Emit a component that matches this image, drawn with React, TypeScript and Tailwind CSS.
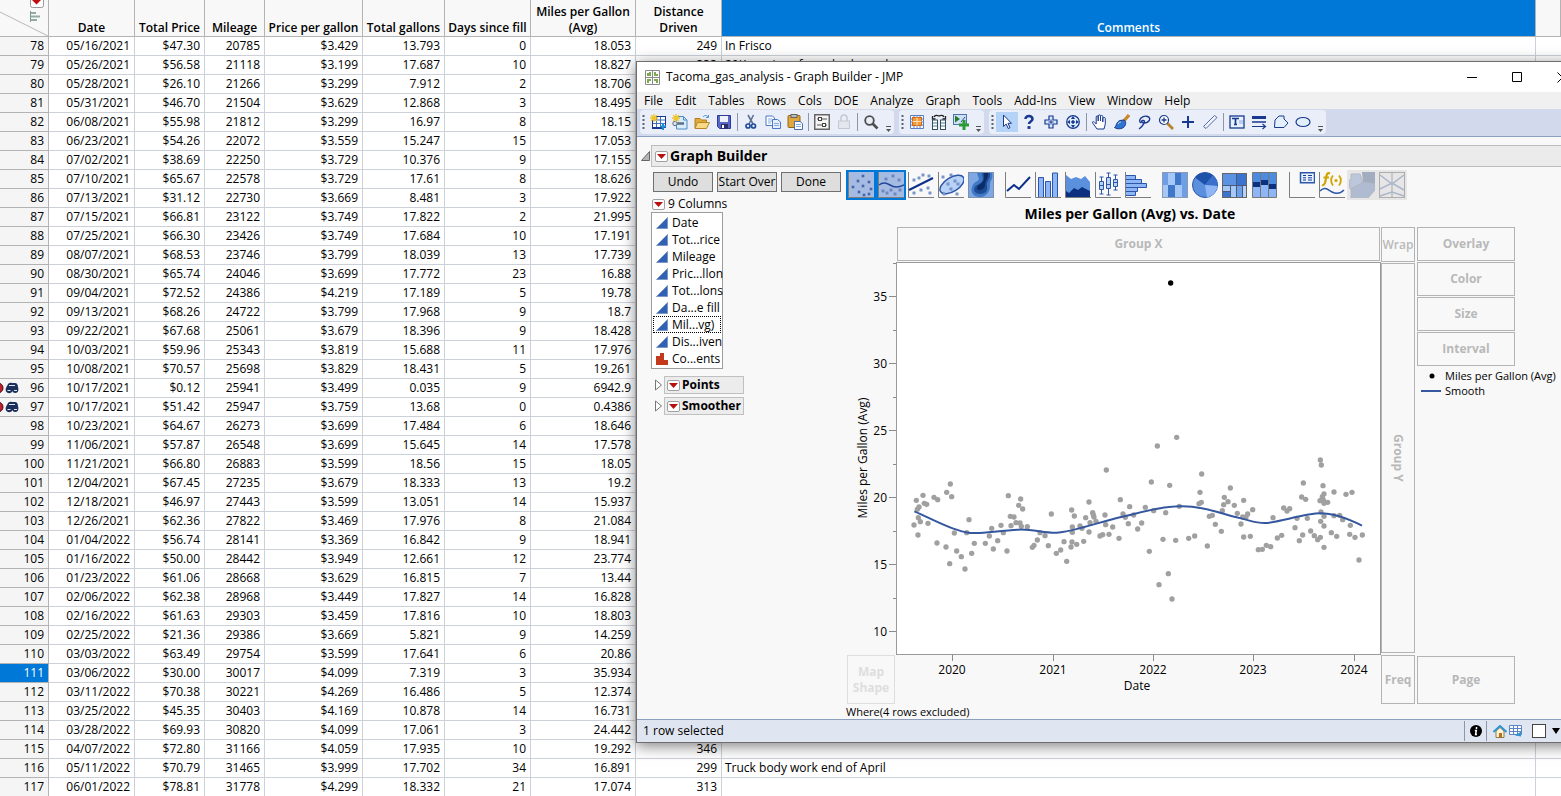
import type { ReactNode } from "react";

interface Fill {
  row: number;
  date: string;
  price: string;
  mileage: number;
  perGallon: string;
  gallons: string;
  days: number;
  mpg: string;
  distance?: string;
  comment?: string;
  excluded?: boolean;
}

const fills: Fill[] = [
  { row: 78, date: "05/16/2021", price: "$47.30", mileage: 20785, perGallon: "$3.429", gallons: "13.793", days: 0, mpg: "18.053", distance: "249", comment: "In Frisco" },
  { row: 79, date: "05/26/2021", price: "$56.58", mileage: 21118, perGallon: "$3.199", gallons: "17.687", days: 10, mpg: "18.827", distance: "333", comment: "20K service of rear brake pads" },
  { row: 80, date: "05/28/2021", price: "$26.10", mileage: 21266, perGallon: "$3.299", gallons: "7.912", days: 2, mpg: "18.706" },
  { row: 81, date: "05/31/2021", price: "$46.70", mileage: 21504, perGallon: "$3.629", gallons: "12.868", days: 3, mpg: "18.495" },
  { row: 82, date: "06/08/2021", price: "$55.98", mileage: 21812, perGallon: "$3.299", gallons: "16.97", days: 8, mpg: "18.15" },
  { row: 83, date: "06/23/2021", price: "$54.26", mileage: 22072, perGallon: "$3.559", gallons: "15.247", days: 15, mpg: "17.053" },
  { row: 84, date: "07/02/2021", price: "$38.69", mileage: 22250, perGallon: "$3.729", gallons: "10.376", days: 9, mpg: "17.155" },
  { row: 85, date: "07/10/2021", price: "$65.67", mileage: 22578, perGallon: "$3.729", gallons: "17.61", days: 8, mpg: "18.626" },
  { row: 86, date: "07/13/2021", price: "$31.12", mileage: 22730, perGallon: "$3.669", gallons: "8.481", days: 3, mpg: "17.922" },
  { row: 87, date: "07/15/2021", price: "$66.81", mileage: 23122, perGallon: "$3.749", gallons: "17.822", days: 2, mpg: "21.995" },
  { row: 88, date: "07/25/2021", price: "$66.30", mileage: 23426, perGallon: "$3.749", gallons: "17.684", days: 10, mpg: "17.191" },
  { row: 89, date: "08/07/2021", price: "$68.53", mileage: 23746, perGallon: "$3.799", gallons: "18.039", days: 13, mpg: "17.739" },
  { row: 90, date: "08/30/2021", price: "$65.74", mileage: 24046, perGallon: "$3.699", gallons: "17.772", days: 23, mpg: "16.88" },
  { row: 91, date: "09/04/2021", price: "$72.52", mileage: 24386, perGallon: "$4.219", gallons: "17.189", days: 5, mpg: "19.78" },
  { row: 92, date: "09/13/2021", price: "$68.26", mileage: 24722, perGallon: "$3.799", gallons: "17.968", days: 9, mpg: "18.7" },
  { row: 93, date: "09/22/2021", price: "$67.68", mileage: 25061, perGallon: "$3.679", gallons: "18.396", days: 9, mpg: "18.428" },
  { row: 94, date: "10/03/2021", price: "$59.96", mileage: 25343, perGallon: "$3.819", gallons: "15.688", days: 11, mpg: "17.976" },
  { row: 95, date: "10/08/2021", price: "$70.57", mileage: 25698, perGallon: "$3.829", gallons: "18.431", days: 5, mpg: "19.261" },
  { row: 96, date: "10/17/2021", price: "$0.12", mileage: 25941, perGallon: "$3.499", gallons: "0.035", days: 9, mpg: "6942.9", excluded: true },
  { row: 97, date: "10/17/2021", price: "$51.42", mileage: 25947, perGallon: "$3.759", gallons: "13.68", days: 0, mpg: "0.4386", excluded: true },
  { row: 98, date: "10/23/2021", price: "$64.67", mileage: 26273, perGallon: "$3.699", gallons: "17.484", days: 6, mpg: "18.646" },
  { row: 99, date: "11/06/2021", price: "$57.87", mileage: 26548, perGallon: "$3.699", gallons: "15.645", days: 14, mpg: "17.578" },
  { row: 100, date: "11/21/2021", price: "$66.80", mileage: 26883, perGallon: "$3.599", gallons: "18.56", days: 15, mpg: "18.05" },
  { row: 101, date: "12/04/2021", price: "$67.45", mileage: 27235, perGallon: "$3.679", gallons: "18.333", days: 13, mpg: "19.2" },
  { row: 102, date: "12/18/2021", price: "$46.97", mileage: 27443, perGallon: "$3.599", gallons: "13.051", days: 14, mpg: "15.937" },
  { row: 103, date: "12/26/2021", price: "$62.36", mileage: 27822, perGallon: "$3.469", gallons: "17.976", days: 8, mpg: "21.084" },
  { row: 104, date: "01/04/2022", price: "$56.74", mileage: 28141, perGallon: "$3.369", gallons: "16.842", days: 9, mpg: "18.941" },
  { row: 105, date: "01/16/2022", price: "$50.00", mileage: 28442, perGallon: "$3.949", gallons: "12.661", days: 12, mpg: "23.774" },
  { row: 106, date: "01/23/2022", price: "$61.06", mileage: 28668, perGallon: "$3.629", gallons: "16.815", days: 7, mpg: "13.44" },
  { row: 107, date: "02/06/2022", price: "$62.38", mileage: 28968, perGallon: "$3.449", gallons: "17.827", days: 14, mpg: "16.828" },
  { row: 108, date: "02/16/2022", price: "$61.63", mileage: 29303, perGallon: "$3.459", gallons: "17.816", days: 10, mpg: "18.803" },
  { row: 109, date: "02/25/2022", price: "$21.36", mileage: 29386, perGallon: "$3.669", gallons: "5.821", days: 9, mpg: "14.259" },
  { row: 110, date: "03/03/2022", price: "$63.49", mileage: 29754, perGallon: "$3.599", gallons: "17.641", days: 6, mpg: "20.86" },
  { row: 111, date: "03/06/2022", price: "$30.00", mileage: 30017, perGallon: "$4.099", gallons: "7.319", days: 3, mpg: "35.934" },
  { row: 112, date: "03/11/2022", price: "$70.38", mileage: 30221, perGallon: "$4.269", gallons: "16.486", days: 5, mpg: "12.374" },
  { row: 113, date: "03/25/2022", price: "$45.35", mileage: 30403, perGallon: "$4.169", gallons: "10.878", days: 14, mpg: "16.731" },
  { row: 114, date: "03/28/2022", price: "$69.93", mileage: 30820, perGallon: "$4.099", gallons: "17.061", days: 3, mpg: "24.442" },
  { row: 115, date: "04/07/2022", price: "$72.80", mileage: 31166, perGallon: "$4.059", gallons: "17.935", days: 10, mpg: "19.292", distance: "346" },
  { row: 116, date: "05/11/2022", price: "$70.79", mileage: 31465, perGallon: "$3.999", gallons: "17.702", days: 34, mpg: "16.891", distance: "299", comment: "Truck body work end of April" },
  { row: 117, date: "06/01/2022", price: "$78.81", mileage: 31778, perGallon: "$4.299", gallons: "18.332", days: 21, mpg: "17.074", distance: "313" },
];

const SELECTED_ROW = 111;

// Scatter points, in thirds of a pixel from the left end of the date axis
const earlyPoints: [number, number][] = [
  [72, 375], [79, 301], [87, 321], [82, 328], [85, 353], [91, 365], [84, 405], [99, 286], [103, 310], [110, 313],
  [114, 370], [132, 292], [143, 299], [141, 429], [170, 277], [181, 252], [185, 290], [168, 441], [179, 491], [193, 399],
  [200, 453], [214, 470], [225, 507], [230, 398], [237, 359], [245, 460], [253, 430], [286, 430], [298, 408], [305, 385],
  [310, 447], [323, 422], [333, 376], [340, 398], [351, 453], [355, 287], [361, 349], [363, 377], [372, 351], [378, 368],
  [386, 316], [392, 297], [398, 327], [390, 369], [394, 379], [412, 380], [427, 442], [432, 436], [442, 420], [450, 398],
  [465, 407], [475, 437], [484, 342], [499, 460], [512, 450], [522, 425], [530, 484], [543, 441], [546, 426], [545, 330],
  [553, 348], [547, 381], [547, 397], [560, 433], [570, 378], [576, 385], [581, 424], [587, 353], [597, 306], [600, 368],
  [597, 396], [608, 338], [610, 345], [612, 351], [618, 364], [630, 408], [638, 404], [645, 345], [647, 374], [649, 210],
  [657, 403], [668, 381], [687, 415], [691, 299], [699, 342], [706, 352], [715, 371], [719, 320], [731, 345], [743, 387],
  [755, 369], [766, 322], [778, 454], [784, 246], [791, 332], [802, 138], [807, 554],
];

const latePoints: [number, number][] = [
  [39, 418], [47, 338], [55, 521], [59, 256], [66, 597], [77, 421], [80, 112], [88, 319], [116, 415], [134, 408],
  [147, 311], [154, 307], [150, 277], [155, 222], [172, 438], [178, 349], [187, 346], [196, 373], [214, 394], [217, 332],
  [221, 314], [223, 292], [234, 305], [241, 264], [253, 316], [262, 340], [273, 372], [278, 351], [288, 351], [281, 301],
  [281, 411], [293, 342], [301, 409], [308, 329], [325, 449], [337, 448], [349, 436], [362, 440], [369, 353], [382, 414],
  [395, 406], [401, 324], [411, 333], [419, 326], [435, 383], [441, 355], [448, 422], [458, 405], [455, 291], [467, 298],
  [460, 249], [472, 355], [482, 393], [493, 407], [503, 419], [511, 412], [511, 180], [514, 195], [519, 257], [522, 282],
  [517, 290], [510, 302], [520, 300], [522, 310], [533, 307], [513, 336], [522, 349], [512, 364], [522, 378], [522, 442],
  [544, 398], [552, 276], [552, 347], [560, 409], [569, 346], [578, 359], [588, 283], [606, 277], [601, 376], [599, 403],
  [615, 412], [627, 480], [637, 405],
];

const yearTicks: [string, number][] = [["2020", 56], ["2021", 157], ["2022", 257], ["2023", 357], ["2024", 458]];

const columns = ["Date", "Tot...rice", "Mileage", "Pric...llon", "Tot...lons", "Da...e fill", "Mil...vg)", "Dis...iven", "Co...ents"];

const menus = ["File", "Edit", "Tables", "Rows", "Cols", "DOE", "Analyze", "Graph", "Tools", "Add-Ins", "View", "Window", "Help"];

function RedTriangle() {
  return (
    <button aria-label="Options" className="flex h-[11px] w-[13px] shrink-0 items-center justify-center rounded-xs border border-[#a0a0a0] bg-white">
      <svg width="9" height="5" viewBox="0 0 9 5">
        <path d="M0 0h9L4.500 5z" fill="#b80f0f" />
      </svg>
    </button>
  );
}

function Icon({ children }: { children: ReactNode }) {
  return (
    <svg width="16" height="16" viewBox="0 0 16 16" fill="none" stroke="#17398f">
      {children}
    </svg>
  );
}

function Tool({ label, active, children }: { label: string; active?: boolean; children: ReactNode }) {
  return (
    <button aria-label={label} className={`flex h-5 w-[22px] items-center justify-center ${active ? "bg-[#b5d3f7]" : ""}`}>
      <Icon>{children}</Icon>
    </button>
  );
}

function Separator() {
  return <div className="mx-0.5 h-[18px] w-px bg-[#8e96a8]" />;
}

function ToolGroup({ children }: { children: ReactNode }) {
  return (
    <div className="flex h-6 items-center rounded-sm bg-[#e9eef9]">
      <svg className="w-[7px]" height="15" viewBox="0 0 7 15">
        <path d="M3.500 0v15" stroke="#5d6474" strokeWidth="2" strokeDasharray="2 2" />
      </svg>
      {children}
      <svg className="mt-3.5 w-3" height="7" viewBox="0 0 12 7">
        <path d="M4 .5h5" stroke="#555" />
        <path d="M4 3h5L6.500 6z" fill="#555" />
      </svg>
    </div>
  );
}

const sparkle = <path d="M4 0v8M0 4h8M1.200 1.200l5.600 5.600M6.800 1.200l-5.600 5.600" stroke="#f0c52e" strokeWidth="1.300" />;

function Toolbar() {
  return (
    <div className="flex h-7 items-start gap-[5px] border-b border-[#8f9fbe] bg-[#d3d9ec] pt-px pl-[3px]">
      <ToolGroup>
        <Tool label="New data table">
          <rect x="2.500" y="2.500" width="13" height="11" fill="#fff" />
          <path d="M3 6h12M3 9.500h12M6.500 3v10M10.500 3v10" stroke="#3f6fb8" />
          <path d="M2 14h11" stroke="#17398f" strokeWidth="2" />
          <path d="M13 9v7M10.500 12.500H16" stroke="#1f8fd0" strokeWidth="2" />
          {sparkle}
        </Tool>
        <Tool label="New script">
          <path d="M4.500 2.500h7l3.500 3.500v9H4.500z" fill="#d9ebfb" stroke="#4d8cc0" />
          <path d="M11.500 2.500v3.500h3.500" stroke="#4d8cc0" />
          <path d="M3 9.500h9" stroke="#5a7185" strokeWidth="2.500" />
          <circle cx="3" cy="9.500" r="2.200" stroke="#5a7185" fill="#dde" />
          {sparkle}
        </Tool>
        <Tool label="Open">
          <path d="M1 4.500h5l1.500 1.500h5v8H1z" fill="#e2ab35" stroke="#b07f1c" />
          <path d="M3.500 8.500h12L12.500 14.500H1z" fill="#f9d986" stroke="#b8872a" />
          <path d="M9 3c1.500-2 4-2 5 0M14.500 1v2.500H12" stroke="#4e8fce" />
        </Tool>
        <Tool label="Save">
          <path d="M1.500 1.500h13v13h-11l-2-2z" fill="#5968c8" stroke="#303b94" />
          <rect x="4" y="2" width="8" height="6" fill="#eef1fb" stroke="none" />
          <rect x="5" y="10" width="7" height="4.500" fill="#2a2f66" stroke="none" />
          <rect x="6" y="11" width="2" height="3" fill="#fff" stroke="none" />
        </Tool>
        <Separator />
        <Tool label="Cut">
          <path d="M5 1l5 9M10.500 1L6 10" stroke="#60708f" strokeWidth="1.600" />
          <circle cx="5" cy="12" r="2" strokeWidth="1.700" stroke="#214d9e" />
          <circle cx="10.500" cy="12" r="2" strokeWidth="1.700" stroke="#214d9e" />
        </Tool>
        <Tool label="Copy">
          <path d="M1 2h6.500l2 2v7.500H1z" fill="#fff" stroke="#4a78c4" />
          <path d="M3 5h4M3 7h4M3 9h3" stroke="#86aae0" />
          <path d="M7.500 5.500h5l3 2.500v6.500h-8z" fill="#e6f0ff" stroke="#4a78c4" />
          <path d="M9 9.500h5M9 11.500h5" stroke="#86aae0" />
        </Tool>
        <Tool label="Paste">
          <rect x="1" y="1.500" width="12" height="12" rx="1" fill="#e0a83c" stroke="#936719" />
          <rect x="4" y=".5" width="6" height="3" fill="#b8bcc4" stroke="#666" />
          <path d="M7.500 7.500h5.500l2.500 2v6h-8z" fill="#fff" stroke="#4a6fae" />
          <path d="M9 10.500h5M9 12.500h5" stroke="#86aae0" />
        </Tool>
        <Separator />
        <Tool label="Local data filter">
          <rect x=".75" y=".75" width="14.500" height="14.500" fill="#f4f4f4" stroke="#666" strokeWidth="1.500" />
          <path d="M3 5h10M3 11h10" stroke="#555" />
          <rect x="4.500" y="3.500" width="3" height="3" fill="#fff" stroke="#444" />
          <rect x="8.500" y="9.500" width="3" height="3" fill="#fff" stroke="#444" />
        </Tool>
        <Tool label="Lock">
          <path d="M5 7V4a3 3 0 016 0v3" stroke="#c3c7d1" strokeWidth="1.400" />
          <rect x="2.500" y="7" width="11" height="7.500" fill="#e3e6ee" stroke="#c3c7d1" />
        </Tool>
        <Separator />
        <Tool label="Search">
          <circle cx="6.500" cy="6.500" r="4.300" stroke="#4d4d4d" strokeWidth="1.800" />
          <path d="M9.500 9.500l5 5" stroke="#4d4d4d" strokeWidth="2.600" />
        </Tool>
      </ToolGroup>
      <ToolGroup>
        <Tool label="Data table">
          <path d="M1.500 1.500h13v13h-13zM2 5h12M2 8h12M2 11h12M5 1v13M8 1v13M11 1v13" fill="#fff" stroke="#5b7fc4" />
          <rect x="3.500" y="3.500" width="9" height="8" fill="#f09a3c" stroke="#d06a1a" />
          <path d="M3.500 7.500h9M8 3.500v8" stroke="#ffe3b8" />
        </Tool>
        <Tool label="Compare tables">
          <path d="M3 3c1-2 3-2 5-1 2-1 4-1 5 1" stroke="#222" strokeWidth="1.300" />
          <path d="M1.500 2v3h3M14.500 2v3h-3" stroke="#222" strokeWidth="1.300" />
          <rect x="1.500" y="6" width="5" height="9.500" fill="#fff" stroke="#344c5c" />
          <rect x="9.500" y="6" width="5" height="9.500" fill="#fff" stroke="#344c5c" />
          <path d="M2 9h4M2 12h4M10 9h4M10 12h4" stroke="#4d7890" />
        </Tool>
        <Tool label="Run script">
          <rect x=".5" y=".5" width="13" height="10" fill="#cfe0f5" stroke="#4e74b0" />
          <path d="M2 1.500l5 3.500-5 3.500z" fill="#1d7d2c" stroke="none" />
          <path d="M8 8l4-5" stroke="#234c9c" />
          <path d="M11 6v10M6 11h10" stroke="#2d9a35" strokeWidth="3" />
        </Tool>
      </ToolGroup>
      <ToolGroup>
        <Tool label="Arrow" active>
          <path d="M4.500 1v11.500l2.700-2.500 2 4.500 1.800-.8-2-4.400h3.500z" fill="#fff" />
        </Tool>
        <Tool label="Help tool">
          <path d="M4.500 5c0-4 7-4 7 0 0 2.500-3.500 2.500-3.500 5" strokeWidth="2.600" />
          <path d="M6.500 13.500h3" strokeWidth="2.800" />
        </Tool>
        <Tool label="Crosshairs">
          <path d="M6 2h4v4h4v4h-4v4H6v-4H2V6h4z" fill="#dbe9fc" strokeWidth="1.200" />
          <path d="M8 5.500v5M5.500 8h5" />
        </Tool>
        <Tool label="Scroller">
          <circle cx="8" cy="8" r="6.300" fill="#dbe9fc" strokeWidth="1.200" />
          <circle cx="8" cy="8" r="1.300" fill="#17398f" />
          <path d="M8 2l2 3H6zM8 14l2-3H6zM2 8l3-2v4zM14 8l-3-2v4z" fill="#17398f" stroke="none" />
        </Tool>
        <Separator />
        <Tool label="Grabber">
          <path d="M5 15L.7 9c-.8-1.500 1-2 2-.5L4.200 10V3c0-1.500 2-1.500 2 0v4V2c0-1.500 2.300-1.500 2.300 0v5-4.500c0-1.400 2.300-1.400 2.300 0V8 4.500c0-1.300 2.500-1.300 2.500 0V10L12 15z" fill="#fff" />
        </Tool>
        <Tool label="Brush">
          <path d="M15 1L9 8" stroke="#c8872a" strokeWidth="3.200" />
          <path d="M10 6c2.500 1.500 2 5 0 7s-7 2.500-9.500.5C2.500 12.500 2 8 6 6.500z" fill="#2f74d0" />
          <path d="M4 10c1-2 2-2 3-2" stroke="#cfe4ff" />
        </Tool>
        <Tool label="Lasso">
          <path d="M5 9C1 6 7 1 11.500 2.500 16 4 13 9 8 9c-3 0-3-3-.5-2.500S7 12 3 15" strokeWidth="1.400" />
        </Tool>
        <Tool label="Magnifier">
          <path d="M9 9l6 6" stroke="#b9832c" strokeWidth="2.800" />
          <circle cx="6" cy="6" r="4.500" fill="#fff" strokeWidth="1.200" />
          <path d="M6 3.500v5M3.500 6h5" strokeWidth="1.300" />
        </Tool>
        <Tool label="Add annotation">
          <path d="M8 2v12M2 8h12" strokeWidth="2" />
        </Tool>
        <Tool label="Ruler">
          <path d="M1.500 12.500l11-11 2.500 2-11 11z" fill="#eef3fd" stroke="#5769a6" />
        </Tool>
        <Separator />
        <Tool label="Text box">
          <rect x="1" y="2" width="14" height="12" fill="#e7f1ff" strokeWidth="1.300" />
          <path d="M3 4.500h7M6.500 4.500v6M5 10.500h3" strokeWidth="1.700" />
          <path d="M10 7h4M10 9h4" stroke="#86aae0" />
        </Tool>
        <Tool label="Line">
          <path d="M1 3.500h14" strokeWidth="3" />
          <path d="M1 8h14" strokeWidth="1.500" />
          <path d="M1 12.500h13M11.500 10l3 2.500-3 2.500" strokeWidth="1.200" />
        </Tool>
        <Tool label="Polygon">
          <path d="M2 6l4-4h5v3l4 4-4 4.500H1.500z" fill="#e3effd" />
        </Tool>
        <Tool label="Oval">
          <ellipse cx="8" cy="8" rx="7" ry="4.500" fill="#e3effd" strokeWidth="1.200" />
        </Tool>
      </ToolGroup>
    </div>
  );
}

function ChartButton({ label, state, children }: { label: string; state?: "on" | "off"; children: ReactNode }) {
  return (
    <button
      aria-label={label}
      className={`flex size-[30px] items-center justify-center ${
        state === "on" ? "bg-[#a5bbe2] outline-2 -outline-offset-2 outline-[#0078d7]" : state === "off" ? "bg-[#e6e6e6]" : ""
      }`}
    >
      <svg width="26" height="26" viewBox="0 0 26 26" fill="none" stroke="#2c56a8">
        {children}
      </svg>
    </button>
  );
}

const axes = <path d="M.5 0v25.500H26" stroke="#7d7d7d" />;

function Dots({ at, fill = "#a9c4f2" }: { at: [number, number][]; fill?: string }) {
  return (
    <>
      {at.map(([x, y]) => (
        <rect key={`${x}-${y}`} x={x} y={y} width="2" height="2" fill={fill} stroke="#5f7cb8" strokeWidth=".8" />
      ))}
    </>
  );
}

function ChartPalette() {
  return (
    <div className="flex gap-[7px]">
      <div className="flex">
        <ChartButton label="Points" state="on">
          {axes}
          <Dots fill="#1b3f9a" at={[[14, 3], [9, 8], [20, 9], [4, 14], [14, 13], [22, 16], [10, 19], [20, 21], [15, 22]]} />
        </ChartButton>
        <ChartButton label="Smoother" state="on">
          {axes}
          <Dots fill="#7f9fdc" at={[[14, 3], [7, 6], [20, 7], [4, 18], [12, 17], [21, 17], [8, 20], [16, 21]]} />
          <path d="M1 13c5-4 9-1 13 1s8 1 12-1" stroke="#23479c" strokeWidth="1.500" />
        </ChartButton>
        <ChartButton label="Line of fit">
          {axes}
          <Dots at={[[14, 2], [5, 7], [10, 5], [20, 3], [5, 20], [12, 17], [19, 15], [21, 20]]} />
          <path d="M1 18L25 6" stroke="#0d2f8c" strokeWidth="2" />
        </ChartButton>
        <ChartButton label="Ellipse">
          {axes}
          <ellipse cx="14" cy="12.500" rx="13.500" ry="7" transform="rotate(-32 14 12.500)" fill="#b9d2f7" strokeWidth="1.500" />
          <Dots at={[[4, 4], [12, 2], [9, 11], [16, 8], [12, 16], [19, 11], [5, 21], [18, 21]]} />
        </ChartButton>
        <ChartButton label="Contour">
          <rect x=".5" y=".5" width="25" height="25" fill="#7fa7e3" stroke="#7b8fae" />
          <path d="M9 1h15c2 6-3 8-2 13 0 6-4 11-10 11S2 21 4 15s6-5 7-8z" fill="#3f78c4" stroke="none" />
          <path d="M14 1h8c1 6-4 8-3 13s-2 8-7 8-7-4-5-7 7-3 8-8z" fill="#1d4b94" stroke="none" />
          <path d="M16 1h4c1 5-3 7-3 12 0 5-8 7-8 3 0-3 6-4 7-9z" fill="#0b2c66" stroke="none" />
        </ChartButton>
      </div>
      <div className="flex">
        <ChartButton label="Line">
          {axes}
          <path d="M2 19l7-6 5 4L25 5" stroke="#0d2f8c" strokeWidth="2" />
        </ChartButton>
        <ChartButton label="Bar">
          <path d="M3.500 5.500h5v20h-5zM10.500 9.500h5v16h-5zM17.500 1h5v24.500h-5z" fill="#8eb5f5" />
          {axes}
        </ChartButton>
        <ChartButton label="Area">
          <path d="M1 3l5 4 5-2 5 2 4-3 5 6v15H1z" fill="#5b90dc" stroke="none" />
          <path d="M1 19l3 2 5-5 4 2 4-3 8 4v6H1z" fill="#0c2f80" stroke="none" />
          {axes}
        </ChartButton>
        <ChartButton label="Box plot">
          {axes}
          <path d="M6.500 5v17M4.500 5h4M4.500 22h4M13.500 1v22M11.500 1h4M11.500 23h4M20.500 3v15M18.500 3h4M18.500 18h4" />
          <path d="M4.500 9.500h4v8h-4zM11.500 5.500h4v11h-4zM18.500 7.500h4v7h-4z" fill="#b9d2f7" />
          <path d="M4.500 13.500h4M11.500 12.500h4M18.500 10.500h4" />
        </ChartButton>
        <ChartButton label="Histogram">
          <path d="M.5 3.500h10v4H.5zM.5 7.500h16v4H.5zM.5 11.500h21v4H.5zM.5 15.500h12v4H.5zM.5 19.500h10v4H.5z" fill="#8eb5f5" />
          {axes}
        </ChartButton>
      </div>
      <div className="flex">
        <ChartButton label="Heatmap">
          <rect width="26" height="26" fill="#6e9fe6" stroke="none" />
          <path d="M6 0h7v13H6zM13 13h7v13h-7zM0 13h6v13H0z" fill="#a6c8f7" stroke="none" />
          <path d="M13 0h6v13h-6zM6 13h7v13H6z" fill="#4077c8" stroke="none" />
          <rect x=".5" y=".5" width="25" height="25" stroke="#8a9ab5" />
        </ChartButton>
        <ChartButton label="Pie">
          <circle cx="13" cy="13" r="12.500" fill="#5b90dc" />
          <path d="M13 13L3 5.500A12.500 12.500 0 0121 3.500z" fill="#1e51aa" stroke="none" />
          <path d="M13 13l8-9.500A12.500 12.500 0 0125.500 14z" fill="#3a70cc" stroke="none" />
          <path d="M13 13l12.500 1A12.500 12.500 0 0115 25.400z" fill="#8eb5f5" stroke="none" />
        </ChartButton>
        <ChartButton label="Treemap">
          <rect x=".5" y="1.500" width="24" height="24" fill="#3a74cf" stroke="#666" />
          <path d="M1 2h13v11H1z" fill="#5b93e2" stroke="none" />
          <path d="M1 13h7v7H1zM8 13h6v12H8z" fill="#a6c8f7" stroke="none" />
          <path d="M14 13h6v12h-6z" fill="#6da0ea" stroke="none" />
          <path d="M20 13h4v12h-4z" fill="#b9d2f7" stroke="none" />
          <path d="M.5 13.500h24M14.500 2v23M8.500 13v12M.5 19.500h8M20.500 13v12" stroke="#49597a" />
        </ChartButton>
        <ChartButton label="Mosaic">
          <path d="M1 1h24v24H1z" fill="#4d8be0" stroke="none" />
          <path d="M1 10h8v5H1zM9 8h8v5H9zM17 12h8v5h-8z" fill="#0c2f80" stroke="none" />
          <path d="M1 15h8v10H1zM9 13h8v12H9zM17 17h8v8h-8z" fill="#8eb5f5" stroke="none" />
          <path d="M.5 .5h24v25H.5zM8.500 0v25M16.500 0v25" stroke="#777" fill="none" />
        </ChartButton>
      </div>
      <div className="flex">
        <ChartButton label="Caption box">
          {axes}
          <rect x="11.500" y=".75" width="14" height="10" fill="#e7f1ff" strokeWidth="1.500" />
          <path d="M14 3.500h3M19 3.500h4M14 5.800h3M19 5.800h4M14 8h3M19 8h4" stroke="#17398f" />
        </ChartButton>
        <ChartButton label="Formula">
          {axes}
          <path d="M1 19c5-5 8-1 12 1s8 2 12-2" strokeWidth="1.500" />
          <path d="M11 1.500C8 0 7.500 3 7 6s-1 8-4 7M4.500 5.500H10" stroke="#d2a400" strokeWidth="2.200" />
          <path d="M14 3.500c-2.500 3-2.500 6.500 0 10M20 3.500c2.500 3 2.500 6.500 0 10" stroke="#d2a400" strokeWidth="1.800" />
          <circle cx="17" cy="8.500" r="1.600" fill="#d2a400" stroke="none" />
        </ChartButton>
        <ChartButton label="Map shapes" state="off">
          <path d="M13 0h13v13l-12-1z" fill="#a3adc0" stroke="none" />
          <path d="M0 8h2V2h9l3 9-13 6z" fill="#bcc7dc" stroke="#b3b8c2" />
          <path d="M2 17l12-7 12 2v6l-7 8H2z" fill="#b0bbd2" stroke="#b3b8c2" />
        </ChartButton>
        <ChartButton label="Parallel" state="off">
          <rect x=".5" y=".5" width="25" height="25" stroke="#adadad" />
          <path d="M13 0v26" stroke="#a8a8a8" />
          <path d="M1 3l12 9 12-9M1 17l12-6 12 7M1 24l12-4 12 4" stroke="#abb5cb" strokeWidth="1.500" />
        </ChartButton>
      </div>
    </div>
  );
}

function DropZone({ className, children }: { className: string; children: ReactNode }) {
  return (
    <div className={`flex items-center justify-center border border-[#b4b4b4] font-bold text-[#b8b8b8] ${className}`}>
      {children}
    </div>
  );
}

function Graph() {
  return (
    <div className="grid grid-cols-[50px_485px_36px_98px] grid-rows-[35px_393px_49px]">
      <DropZone className="col-start-2 mx-px mb-px">Group X</DropZone>
      <DropZone className="mr-0.5 font-semibold">Wrap</DropZone>
      <div className="row-span-3 flex flex-col gap-px">
        <DropZone className="h-[34px]">Overlay</DropZone>
        <DropZone className="h-[34px]">Color</DropZone>
        <DropZone className="h-[34px]">Size</DropZone>
        <DropZone className="h-[34px]">Interval</DropZone>
        <div className="mt-px ml-1 flex flex-col text-[11px] leading-[15px] whitespace-nowrap">
          <div className="flex items-center gap-1">
            <svg width="20" height="6" viewBox="0 0 20 6" className="shrink-0">
              <circle cx="11" cy="3" r="2.500" />
            </svg>
            Miles per Gallon (Avg)
          </div>
          <div className="flex items-center gap-1">
            <svg width="20" height="2" viewBox="0 0 20 2" className="shrink-0">
              <path d="M0 1h20" stroke="#34579f" strokeWidth="2" />
            </svg>
            Smooth
          </div>
        </div>
        <DropZone className="mt-auto h-12">Page</DropZone>
      </div>

      <svg width="50" height="393" viewBox="0 0 50 393" className="text-xs">
        <text x="21" y="196" textAnchor="middle" transform="rotate(-90 21 196)">
          Miles per Gallon (Avg)
        </text>
        {[35, 30, 25, 20, 15, 10].map((value, i) => (
          <g key={value}>
            <text x="41" y={39 + i * 67} textAnchor="end">
              {value}
            </text>
            <path d={`M43 ${34.5 + i * 67}h7M47 ${1.5 + i * 67}h3`} stroke="#8c8c8c" />
          </g>
        ))}
      </svg>
      <svg width="485" height="393" viewBox="0 0 1455 1179">
        <rect x="1.500" y="1.500" width="1452" height="1176" fill="#fff" stroke="#9a9a9a" strokeWidth="3" />
        <g transform="translate(-18 414)">
          <g fill="#a0a0a0">
            {earlyPoints.map(([x, y], i) => (
              <circle key={i} cx={x} cy={y} r="8" />
            ))}
            {latePoints.map(([x, y], i) => (
              <circle key={i} cx={x + 780} cy={y} r="8" />
            ))}
          </g>
          <circle cx="842" cy="-351" r="8" />
          <path
            d="M73 334C110 350 150 372 190 386S240 399 262 399 340 391 385 389 460 399 500 398 630 366 690 352 800 321 868 319 990 340 1040 352 1095 369 1125 369 1250 340 1290 340 1370 354 1416 377"
            fill="none"
            stroke="#34579f"
            strokeWidth="6"
          />
        </g>
      </svg>
      <DropZone className="mt-px mr-0.5 mb-0.5">
        <span className="[writing-mode:vertical-rl]">Group Y</span>
      </DropZone>

      <div className="mx-px flex items-center justify-center border border-[#dedede] text-center leading-4 font-bold text-[#dedede]">
        Map
        <br />
        Shape
      </div>
      <svg width="485" height="49" viewBox="0 0 485 49" className="text-xs">
        {yearTicks.map(([year, x]) => (
          <g key={year}>
            <path d={`M${x + 0.5} 0v6`} stroke="#8c8c8c" />
            <text x={x} y="19" textAnchor="middle">
              {year}
            </text>
          </g>
        ))}
        <text x="241" y="35" textAnchor="middle">
          Date
        </text>
      </svg>
      <DropZone className="mr-0.5">Freq</DropZone>
    </div>
  );
}

function OutlineItem({ title }: { title: string }) {
  return (
    <div className="ml-1 flex h-[18px] items-center gap-0.5">
      <svg width="7" height="12" viewBox="0 0 7 12">
        <path d="M.5 1v10L6.500 6z" fill="#fff" stroke="#777" />
      </svg>
      <div className="flex h-full w-20 items-center gap-0.5 border border-[#c0c0c0] bg-[#ececec] pl-0.5 font-bold">
        <RedTriangle />
        {title}
      </div>
    </div>
  );
}

function ColumnPanel() {
  return (
    <div className="flex w-[195px] flex-col">
      <div className="flex gap-1 pl-0.5">
        {["Undo", "Start Over", "Done"].map((label) => (
          <button key={label} className="h-5 w-[60px] border border-[#707070] bg-[#dedede] leading-4 whitespace-nowrap">
            {label}
          </button>
        ))}
      </div>
      <div className="mt-1 flex h-4 items-center gap-[3px] pl-px">
        <RedTriangle />
        9 Columns
      </div>
      <ul className="w-[72px] border border-[#9c9c9c] bg-white p-px">
        {columns.map((name, i) => (
          <li
            key={name}
            className={`flex h-[17px] items-center gap-1 border pl-0.5 whitespace-nowrap ${
              name === "Mil...vg)" ? "border-dotted border-black" : "border-transparent"
            }`}
          >
            <svg width="12" height="12" viewBox="0 0 12 12" className="shrink-0">
              {i < 8 ? (
                <path d="M.5 11.500h11V.5z" fill="#2f62b4" stroke="#7c97c4" />
              ) : (
                <path d="M0 3h4V0h4v7h4v5H0z" fill="#c2391c" />
              )}
            </svg>
            {name}
          </li>
        ))}
      </ul>
      <div className="mt-[7px] flex flex-col gap-[3px]">
        <OutlineItem title="Points" />
        <OutlineItem title="Smoother" />
      </div>
    </div>
  );
}

function StatusBar() {
  return (
    <div className="flex h-[23px] items-center border-t border-[#8f9fbe] bg-[#e0e6f1] pr-[25px] pl-1.5">
      <span className="mr-auto">1 row selected</span>
      <div className="flex h-5 w-[23px] items-center justify-center border-x border-[#8e96a8]">
        <svg width="12" height="12" viewBox="0 0 12 12">
          <circle cx="6" cy="6" r="6" />
          <path d="M6.500 2v2M4.800 5.500h1.500L5.600 9.500H7" stroke="#fff" strokeWidth="1.500" fill="none" />
        </svg>
      </div>
      <button aria-label="Home" className="ml-1.5">
        <svg width="14" height="13" viewBox="0 0 14 13">
          <path d="M3 6v6.500h8V6L7 2.500z" fill="#fff3cf" stroke="#8a7a50" />
          <path d="M.5 7L7 1l6.500 6" fill="none" stroke="#2f95d0" strokeWidth="2" />
          <path d="M6 8h3v4.500H6z" fill="#b3701f" />
        </svg>
      </button>
      <button aria-label="Data table" className="ml-0.5">
        <svg width="13" height="12" viewBox="0 0 13 12">
          <path d="M.5 .5h12v9H.5zM.5 3.500h12M.5 6.500h12M4.500 .5v9M8.500 .5v9" fill="#fff" stroke="#5b85c4" />
          <path d="M6 10.500l6-4v5z" fill="#2f95d0" />
        </svg>
      </button>
      <input type="checkbox" aria-label="Show window" className="ml-2.5 size-[14px] appearance-none border border-[#444] bg-white" />
      <button aria-label="Arrange windows" className="ml-1.5">
        <svg width="8" height="6" viewBox="0 0 8 6">
          <path d="M0 0h8L4 6z" />
        </svg>
      </button>
    </div>
  );
}

function GraphBuilderWindow() {
  return (
    <section className="absolute top-[61px] -right-[25px] left-[636px] border border-[#6e6e6e] bg-[#f8f8f8] shadow-[0_3px_14px_rgba(0,0,0,0.5)]">
      <header className="flex h-[30px] items-center bg-white pl-2">
        <svg width="15" height="15" viewBox="0 0 15 15">
          <path d="M.5 .5h14v14H.5zM7.500 0v15M0 7.500h15" fill="#fff" stroke="#8a8a8a" />
          <path d="M2 3h2v-1h2v4H2zM9 2h2v2h2v2H9zM2 9h4v2H4v2H2zM9 9h4v4h-2v-2H9z" fill="#7fa853" />
        </svg>
        <h1 className="ml-1.5">Tacoma_gas_analysis - Graph Builder - JMP</h1>
        <div className="ml-auto flex">
          <button aria-label="Minimize" className="flex w-[45px] justify-center">
            <svg width="11" height="11" viewBox="0 0 11 11" fill="none" stroke="#000">
              <path d="M0 5.500h10" />
            </svg>
          </button>
          <button aria-label="Maximize" className="flex w-[45px] justify-center">
            <svg width="11" height="11" viewBox="0 0 11 11" fill="none" stroke="#000">
              <path d="M.5 .5h9v9h-9z" />
            </svg>
          </button>
          <button aria-label="Close" className="flex w-[45px] justify-center">
            <svg width="11" height="11" viewBox="0 0 11 11" fill="none" stroke="#000">
              <path d="M.5 .5l10 10M10.500 .5l-10 10" />
            </svg>
          </button>
        </div>
      </header>
      <nav className="flex h-[17px] items-center gap-3 bg-[#f0f0f0] pl-[7px]">
        {menus.map((menu) => (
          <button key={menu} className="leading-4">
            {menu}
          </button>
        ))}
      </nav>
      <Toolbar />

      <div className="px-1 pt-2">
        <div className="flex items-center gap-px">
          <svg width="9" height="10" viewBox="0 0 9 10">
            <path d="M.5 9.500h8V.5z" fill="#b5b5b5" stroke="#666" />
          </svg>
          <div className="flex h-[22px] flex-1 items-center gap-0.5 border border-[#bdbdbd] bg-[#ebebeb] pl-[3px]">
            <RedTriangle />
            <h2 className="text-sm font-bold">Graph Builder</h2>
          </div>
        </div>
        <div className="mt-[3px] flex pl-2.5">
          <div className="pt-0.5">
            <ColumnPanel />
          </div>
          <div>
            <ChartPalette />
            <h3 className="mt-1 mb-1 w-[568px] text-center text-sm leading-[19px] font-bold">Miles per Gallon (Avg) vs. Date</h3>
            <Graph />
            <p className="text-[11px] leading-[15px]">Where(4 rows excluded)</p>
          </div>
        </div>
      </div>
      <StatusBar />
    </section>
  );
}

function RowMarks() {
  return (
    <svg width="20" height="12" viewBox="0 0 20 12">
      <circle cx="-2" cy="6" r="5" fill="#c01f2e" stroke="#4c0a10" />
      <path d="M7 4c1-3 3-4 5-3h3c2 0 3 2 3 4 1 3 0 6-2.500 6S13 10 12.500 9C12 11 9 12 7 10.500S5.500 6 7 4z" fill="#1c2f5a" />
      <path d="M7.500 8.500h3M14 8.500h3M9 3.500h6" stroke="#dfe6f5" />
    </svg>
  );
}

function DataTable() {
  const th = "h-[37px] border-r border-b border-[#b3b3b3] bg-[#f8f8f8] p-0 align-bottom leading-4 font-semibold";
  const td = "h-[19px] border-r border-b border-[#ccd0d8] p-0 pr-1 text-right";
  return (
    <table className="w-full table-fixed border-separate border-spacing-0 leading-4 whitespace-nowrap">
      <colgroup>
        <col className="w-[49px]" />
        <col className="w-[86px]" />
        <col className="w-[70px]" />
        <col className="w-[60px]" />
        <col className="w-[98px]" />
        <col className="w-[82px]" />
        <col className="w-[86px]" />
        <col className="w-[105px]" />
        <col className="w-[86px]" />
        <col />
        <col className="w-[25px]" />
      </colgroup>
      <thead>
        <tr>
          <th className={th}>
            <svg width="48" height="36" viewBox="0 0 48 36">
              <path d="M0 12l48 24" stroke="#b8b8b8" />
              <rect x="30.500" y="-5.500" width="13" height="13" rx="2" fill="#fff" stroke="#999" />
              <path d="M32 0h9l-4.500 4.500z" fill="#c00d0d" />
              <path d="M30.500 11v11" stroke="#7f9a90" />
              <path d="M31 13h5M31 16.500h9M31 20h6" stroke="#93aaa2" strokeWidth="2" />
            </svg>
          </th>
          <th className={th}>Date</th>
          <th className={th}>Total Price</th>
          <th className={th}>Mileage</th>
          <th className={th}>Price per gallon</th>
          <th className={th}>Total gallons</th>
          <th className={th}>Days since fill</th>
          <th className={th}>
            Miles per Gallon
            <br />
            (Avg)
          </th>
          <th className={th}>
            Distance
            <br />
            Driven
          </th>
          <th className="h-[37px] border-r border-b border-[#b3b3b3] bg-[#0078d7] p-0 align-bottom leading-4 font-semibold text-white">
            Comments
          </th>
          <th className={th} />
        </tr>
      </thead>
      <tbody>
        {fills.map((fill) => (
          <tr key={fill.row}>
            <th
              className={`h-[19px] border-r border-b border-[#b3b3b3] p-0 font-normal ${
                fill.row === SELECTED_ROW ? "bg-[#0078d7] text-white" : "bg-[#f5f5f5]"
              }`}
            >
              <div className="flex h-[18px] items-center pr-1">
                {fill.excluded && <RowMarks />}
                <span className="ml-auto">{fill.row}</span>
              </div>
            </th>
            <td className={td}>{fill.date}</td>
            <td className={td}>{fill.price}</td>
            <td className={td}>{fill.mileage}</td>
            <td className={td}>{fill.perGallon}</td>
            <td className={td}>{fill.gallons}</td>
            <td className={td}>{fill.days}</td>
            <td className={td}>{fill.mpg}</td>
            <td className={td}>{fill.distance}</td>
            <td className="h-[19px] border-r border-b border-[#ccd0d8] p-0 pl-[3px] text-left">{fill.comment}</td>
            <td className="h-[19px] border-b border-[#ccd0d8] p-0" />
          </tr>
        ))}
      </tbody>
    </table>
  );
}

export default function App() {
  return (
    <main className="relative h-screen overflow-hidden bg-white font-['Open_Sans','Noto_Sans',sans-serif] text-xs text-black">
      <DataTable />
      <GraphBuilderWindow />
    </main>
  );
}
